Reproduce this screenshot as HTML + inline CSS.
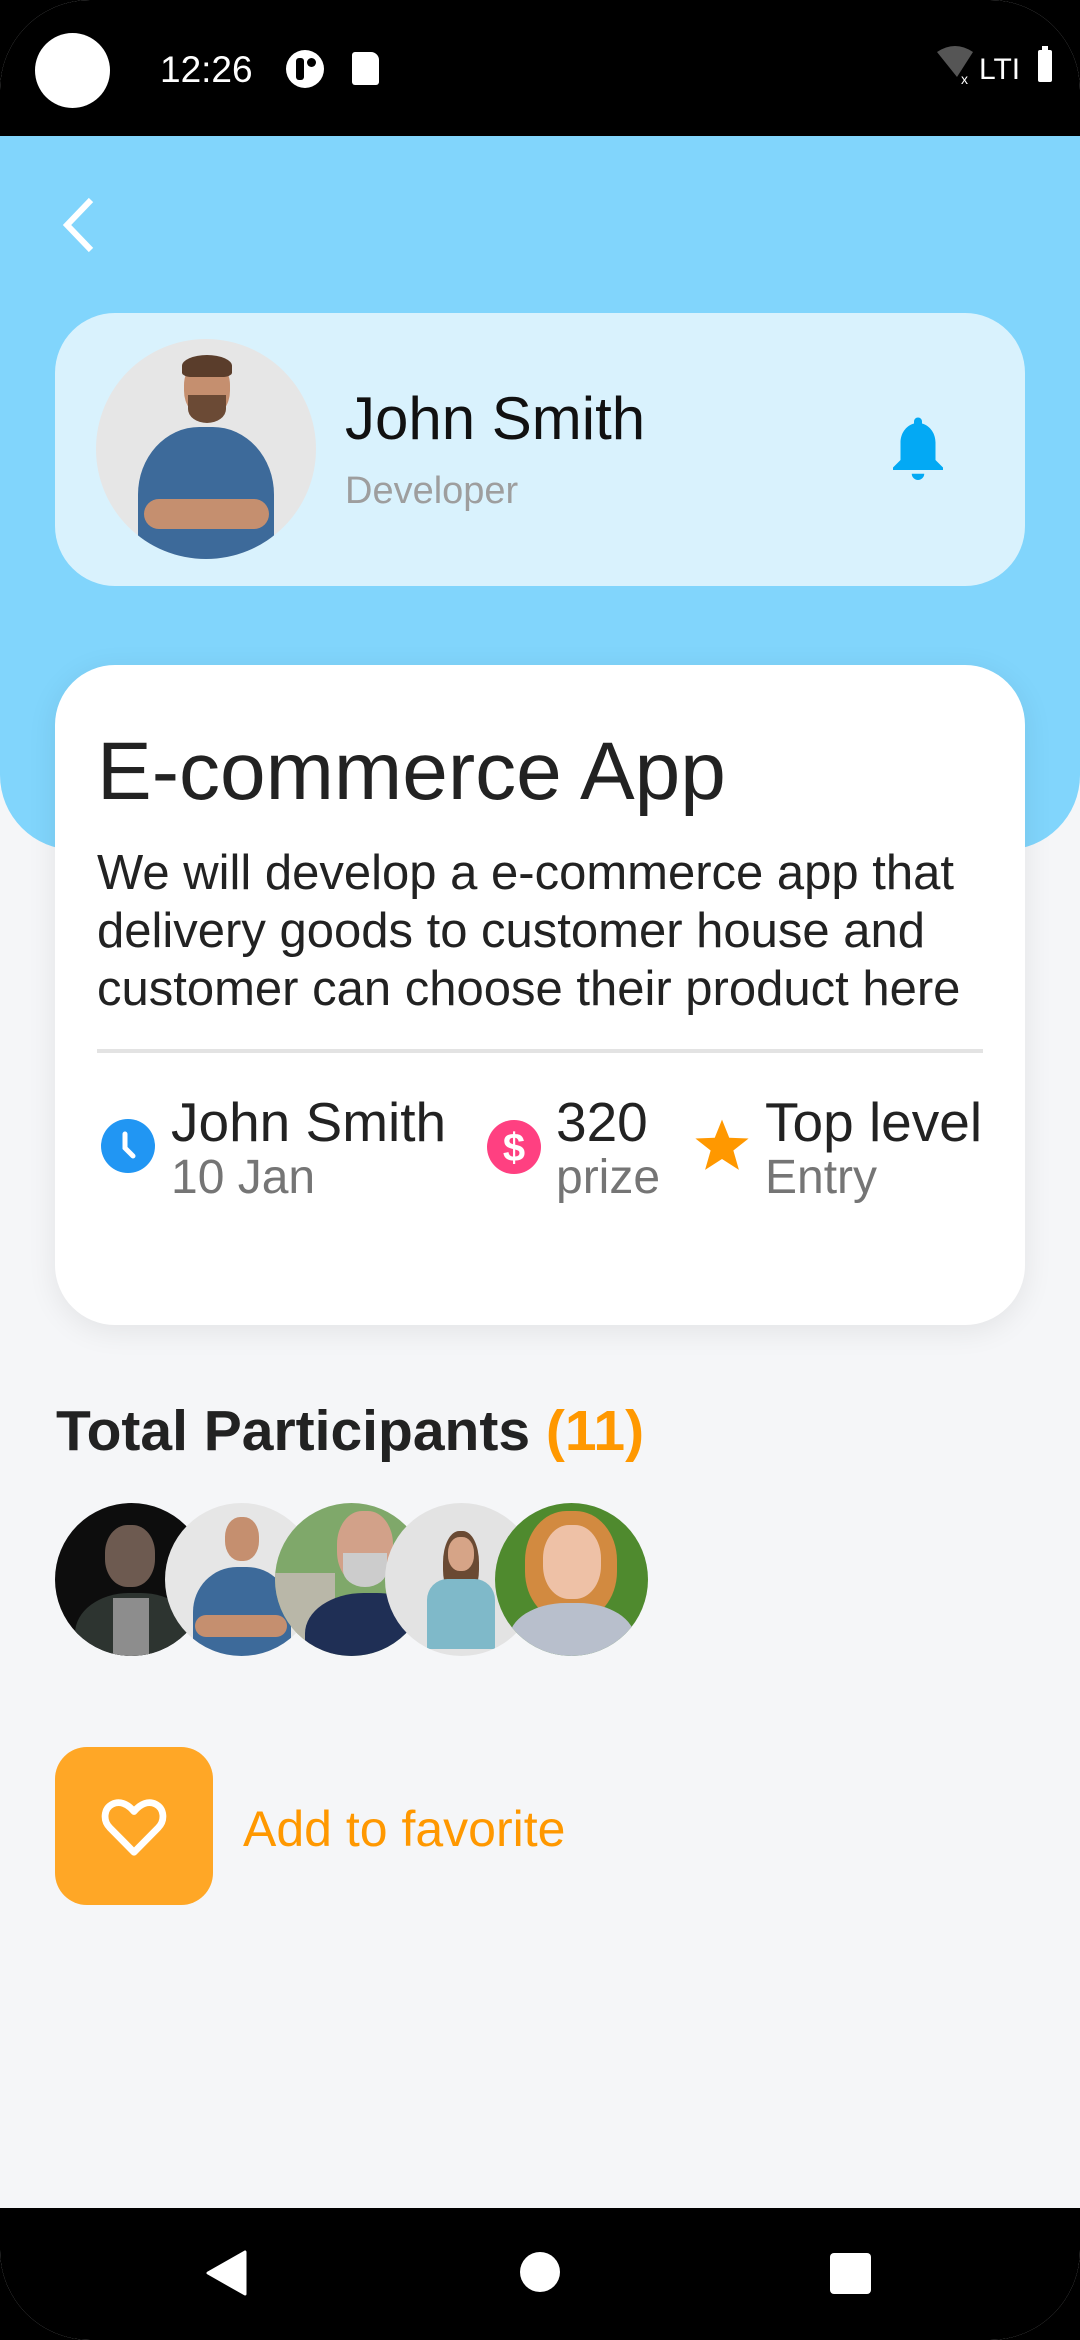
<!DOCTYPE html>
<html><head><meta charset="utf-8">
<style>
*{margin:0;padding:0;box-sizing:border-box}
html,body{width:1080px;height:2340px;overflow:hidden;background:#000}
body{font-family:"Liberation Sans",sans-serif;position:relative}
.frame{position:absolute;left:0;top:0;width:1080px;height:2340px;background:#F5F6F8;border-radius:90px;overflow:hidden}
.abs{position:absolute}
.sx{white-space:nowrap}
</style></head><body>
<div class="frame">
  <!-- status bar -->
  <div class="abs" style="left:0;top:0;width:1080px;height:136px;background:#000"></div>
  <div class="abs" style="left:35px;top:33px;width:75px;height:75px;border-radius:50%;background:#fff"></div>
  <div class="abs sx" style="left:160px;top:49px;font-size:37px;color:#fff">12:26</div>
  <div class="abs" style="left:286px;top:50px;width:38px;height:38px;border-radius:50%;background:#fff"></div>
  <div class="abs" style="left:296px;top:58px;width:8px;height:22px;background:#000;border-radius:3px"></div>
  <div class="abs" style="left:307px;top:58px;width:9px;height:9px;background:#000;border-radius:50%"></div>
  <div class="abs" style="left:352px;top:52px;width:27px;height:33px;background:#fff;border-radius:3px 8px 3px 3px"></div>
  <svg class="abs" style="left:935px;top:44px" width="135" height="44">
    <path d="M2 8 Q20 -4 38 8 L22 33 Z" fill="#555"/>
    <text x="26" y="40" font-size="14" fill="#fff" font-family="Liberation Sans">x</text>
    <text x="44" y="35" font-size="30" fill="#fff" font-family="Liberation Sans">LTI</text>
    <rect x="103" y="6" width="14" height="32" rx="2" fill="#fff"/><rect x="107" y="2" width="6" height="5" fill="#fff"/>
  </svg>

  <!-- header -->
  <div class="abs" style="left:0;top:136px;width:1080px;height:714px;background:#81D5FC;border-radius:0 0 75px 75px"></div>
  <svg class="abs" style="left:55px;top:195px" width="50" height="60"><path d="M36 5 L12 30 L36 55" stroke="#fff" stroke-width="6" fill="none"/></svg>

  <div class="abs" style="left:55px;top:313px;width:970px;height:273px;background:#D9F2FD;border-radius:60px"></div>
  <div class="abs" style="left:96px;top:339px;width:220px;height:220px;border-radius:50%;background:#E6E6E6;overflow:hidden">
    <div class="abs" style="left:88px;top:20px;width:46px;height:58px;border-radius:45%;background:#c58f6f"></div>
    <div class="abs" style="left:86px;top:16px;width:50px;height:22px;border-radius:50% 50% 20% 20%;background:#5a3d2b"></div>
    <div class="abs" style="left:92px;top:56px;width:38px;height:28px;border-radius:0 0 50% 50%;background:#6b4a35"></div>
    <div class="abs" style="left:42px;top:88px;width:136px;height:150px;border-radius:45% 45% 0 0;background:#3d6a9a"></div>
    <div class="abs" style="left:48px;top:160px;width:125px;height:30px;border-radius:15px;background:#c58f6f"></div>
  </div>
  <div class="abs sx" style="left:345px;top:384px;font-size:60px;color:#111">John Smith</div>
  <div class="abs sx" style="left:345px;top:470px;font-size:38px;color:#9E9E9E">Developer</div>
  <svg class="abs" style="left:888px;top:415px" width="60" height="70" viewBox="0 0 24 28">
    <path d="M12 1 a1.6 1.6 0 0 1 1.6 1.6 v0.8 C17 4.4 19 7.5 19 11 v7 l3 3 v1 H2 v-1 l3-3 v-7 c0-3.5 2-6.6 5.4-7.6 v-0.8 A1.6 1.6 0 0 1 12 1z M9.5 23.5 h5 a2.5 2.5 0 0 1 -5 0z" fill="#03A9F4"/>
  </svg>

  <!-- main card -->
  <div class="abs" style="left:55px;top:665px;width:970px;height:660px;background:#fff;border-radius:60px;box-shadow:0 6px 30px rgba(0,0,0,0.08)"></div>
  <div class="abs sx" style="left:97px;top:725px;font-size:82px;color:#222">E-commerce App</div>
  <div class="abs sx" style="left:97px;top:844px;font-size:49px;line-height:58px;color:#222">We will develop a e-commerce app that<br>delivery goods to customer house and<br>customer can choose their product here</div>
  <div class="abs" style="left:97px;top:1049px;width:886px;height:4px;background:#E3E3E3"></div>

  <svg class="abs" style="left:100px;top:1118px" width="56" height="56" viewBox="0 0 56 56"><circle cx="28" cy="28" r="27" fill="#2196F3"/><path d="M25 16 V30 L33 38" stroke="#fff" stroke-width="5" fill="none" stroke-linecap="round"/></svg>
  <div class="abs sx" style="left:171px;top:1090px;font-size:55px;color:#222">John Smith</div>
  <div class="abs sx" style="left:171px;top:1150px;font-size:48px;color:#757575">10 Jan</div>

  <svg class="abs" style="left:486px;top:1119px" width="56" height="56" viewBox="0 0 56 56"><circle cx="28" cy="28" r="27" fill="#FF4081"/><text x="28" y="42" font-size="40" font-weight="bold" fill="#fff" text-anchor="middle" font-family="Liberation Sans">$</text></svg>
  <div class="abs sx" style="left:556px;top:1090px;font-size:55px;color:#222">320</div>
  <div class="abs sx" style="left:556px;top:1150px;font-size:48px;color:#757575">prize</div>

  <svg class="abs" style="left:693px;top:1116px" width="58" height="58" viewBox="0 0 24 24"><path d="M12 1.5 L15 9 L23 9.3 L16.7 14.3 L19 22.3 L12 17.8 L5 22.3 L7.3 14.3 L1 9.3 L9 9 Z" fill="#FF9800"/></svg>
  <div class="abs sx" style="left:765px;top:1090px;font-size:55px;color:#222">Top level</div>
  <div class="abs sx" style="left:765px;top:1150px;font-size:48px;color:#757575">Entry</div>

  <!-- participants -->
  <div class="abs sx" style="left:56px;top:1398px;font-size:57px;font-weight:bold;color:#222">Total Participants <span style="color:#FF9800">(11)</span></div>

  <div class="abs" style="left:55px;top:1503px;width:153px;height:153px;border-radius:50%;background:#0d0d0d;overflow:hidden">
    <div class="abs" style="left:50px;top:22px;width:50px;height:62px;border-radius:45%;background:#6d5a50"></div>
    <div class="abs" style="left:20px;top:90px;width:120px;height:90px;border-radius:45% 45% 0 0;background:#2d3430"></div>
    <div class="abs" style="left:58px;top:95px;width:36px;height:70px;background:#8d8d8d"></div>
  </div>
  <div class="abs" style="left:165px;top:1503px;width:153px;height:153px;border-radius:50%;background:#E6E6E6;overflow:hidden">
    <div class="abs" style="left:60px;top:14px;width:34px;height:44px;border-radius:45%;background:#c58f6f"></div>
    <div class="abs" style="left:28px;top:64px;width:98px;height:100px;border-radius:45% 45% 0 0;background:#3d6a9a"></div>
    <div class="abs" style="left:30px;top:112px;width:92px;height:22px;border-radius:11px;background:#c58f6f"></div>
  </div>
  <div class="abs" style="left:275px;top:1503px;width:153px;height:153px;border-radius:50%;background:#7fa86a;overflow:hidden">
    <div class="abs" style="left:0;top:70px;width:60px;height:90px;background:#b9b7a8"></div>
    <div class="abs" style="left:62px;top:8px;width:56px;height:74px;border-radius:45%;background:#d2a189"></div>
    <div class="abs" style="left:68px;top:50px;width:44px;height:34px;border-radius:0 0 50% 50%;background:#ccc"></div>
    <div class="abs" style="left:30px;top:90px;width:130px;height:90px;border-radius:45% 45% 0 0;background:#1f2f55"></div>
  </div>
  <div class="abs" style="left:385px;top:1503px;width:153px;height:153px;border-radius:50%;background:#E3E3E3;overflow:hidden">
    <div class="abs" style="left:58px;top:28px;width:36px;height:70px;border-radius:45%;background:#6a4a33"></div>
    <div class="abs" style="left:63px;top:34px;width:26px;height:34px;border-radius:45%;background:#d6a487"></div>
    <div class="abs" style="left:42px;top:76px;width:68px;height:70px;border-radius:30% 30% 0 0;background:#7fb9c9"></div>
  </div>
  <div class="abs" style="left:495px;top:1503px;width:153px;height:153px;border-radius:50%;background:#4f8a2e;overflow:hidden">
    <div class="abs" style="left:30px;top:8px;width:92px;height:110px;border-radius:45%;background:#d28a40"></div>
    <div class="abs" style="left:48px;top:22px;width:58px;height:74px;border-radius:45%;background:#eec1a6"></div>
    <div class="abs" style="left:14px;top:100px;width:126px;height:80px;border-radius:45% 45% 0 0;background:#b8bfcc"></div>
  </div>

  <!-- favorite -->
  <div class="abs" style="left:55px;top:1747px;width:158px;height:158px;border-radius:32px;background:#FFA726"></div>
  <svg class="abs" style="left:97px;top:1789px" width="74" height="74" viewBox="0 0 24 24"><path d="M12 20.5 L4.2 12.6 C1.8 10.2 2.2 6.3 5 4.9 C7.2 3.8 9.8 4.6 12 7.3 C14.2 4.6 16.8 3.8 19 4.9 C21.8 6.3 22.2 10.2 19.8 12.6 Z" stroke="#fff" stroke-width="2.2" fill="none" stroke-linejoin="round"/></svg>
  <div class="abs sx" style="left:243px;top:1800px;font-size:50px;color:#FF9800">Add to favorite</div>

  <!-- nav bar -->
  <div class="abs" style="left:0;top:2208px;width:1080px;height:132px;background:#000"></div>
  <svg class="abs" style="left:200px;top:2248px" width="50" height="50"><path d="M45 4 V46 L8 25 Z" fill="#fff" stroke="#fff" stroke-width="3" stroke-linejoin="round"/></svg>
  <div class="abs" style="left:520px;top:2252px;width:40px;height:40px;border-radius:50%;background:#fff"></div>
  <div class="abs" style="left:830px;top:2253px;width:41px;height:41px;border-radius:4px;background:#fff"></div>
</div>
</body></html>
